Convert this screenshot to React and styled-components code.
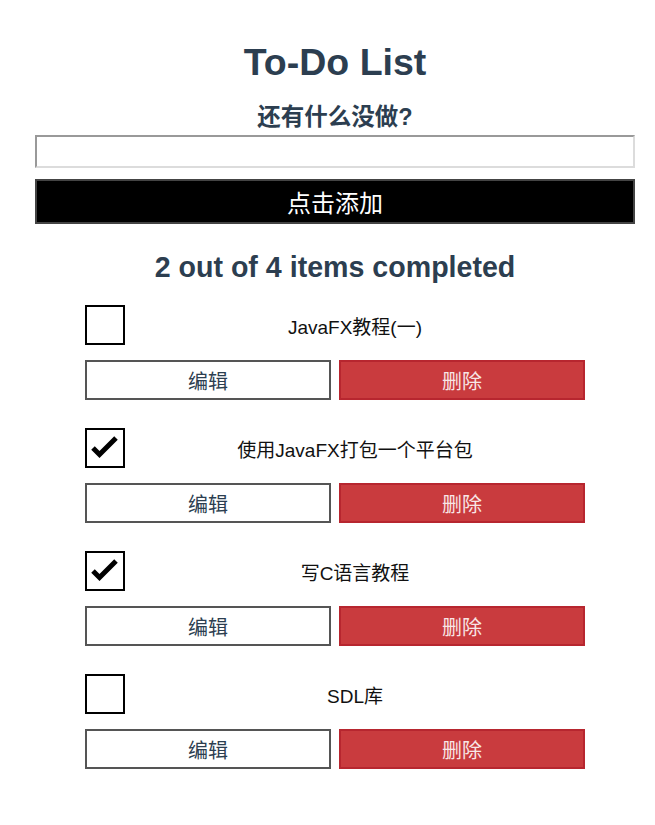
import React, { useState } from "react";
import styled, { createGlobalStyle } from "styled-components";

const Global = createGlobalStyle`
  html, body { margin: 0; padding: 0; background: #fff; }
  body { font-family: "Liberation Sans", "Noto Sans CJK SC", sans-serif; }
  * { box-sizing: border-box; }
`;

const Page = styled.div`
  width: 600px;
  margin-left: 35px;
  padding-top: 40px;
  display: flex;
  flex-direction: column;
  align-items: stretch;
  color: #2c3e50;
`;

const Title = styled.h1`
  margin: 0;
  font-size: 37.5px;
  line-height: 44px;
  font-weight: bold;
  text-align: center;
`;

const Subtitle = styled.h2`
  margin: 18px 0 0;
  font-size: 23.5px;
  line-height: 30px;
  font-weight: bold;
  text-align: center;
`;

const TextInput = styled.input`
  margin-top: 3px;
  height: 33px;
  width: 100%;
  border: 2px solid;
  border-color: #999 #dcdcdc #dcdcdc #999;
  font-size: 18px;
  padding: 0 6px;
  outline: none;
`;

const AddButton = styled.button`
  margin-top: 11px;
  height: 45px;
  width: 100%;
  background: #000;
  color: #fff;
  border: 2px solid #444;
  font-family: "Liberation Sans", "Noto Sans CJK SC", sans-serif;
  font-size: 24px;
  cursor: pointer;
`;

const Summary = styled.h2`
  margin: 26px 0 0;
  font-size: 28.6px;
  line-height: 34px;
  font-weight: bold;
  text-align: center;
`;

const List = styled.ul`
  list-style: none;
  margin: 21px 0 0 50px;
  padding: 0;
  width: 500px;
  display: flex;
  flex-direction: column;
  gap: 28px;
`;

const Item = styled.li`
  display: flex;
  flex-direction: column;
  gap: 15px;
`;

const Row = styled.div`
  display: flex;
  align-items: center;
`;

const Check = styled.button`
  width: 40px;
  height: 40px;
  flex: none;
  padding: 0;
  border: 2px solid #000;
  background: #fff;
  display: flex;
  align-items: center;
  justify-content: center;
  cursor: pointer;
`;

const Label = styled.span`
  flex: 1;
  text-align: center;
  font-size: 19px;
  color: #111;
`;

const Buttons = styled.div`
  display: grid;
  grid-template-columns: 1fr 1fr;
  gap: 8px;
`;

const ActionButton = styled.button`
  height: 40px;
  font-family: "Liberation Sans", "Noto Sans CJK SC", sans-serif;
  font-size: 20px;
  cursor: pointer;
  border: 2px solid ${(p) => (p.$danger ? "#b7262f" : "#555")};
  background: ${(p) => (p.$danger ? "#c93b3e" : "#fff")};
  color: ${(p) => (p.$danger ? "#f8e6e6" : "#2c3e50")};
`;

const CheckMark = () => (
  <svg width="30" height="30" viewBox="0 0 30 30">
    <path
      d="M3 15 L9.5 21.5 L26 5"
      fill="none"
      stroke="#000"
      strokeWidth="5"
      strokeLinecap="butt"
      strokeLinejoin="miter"
    />
  </svg>
);

const initial = [
  { id: 1, name: "JavaFX教程(一)", done: false },
  { id: 2, name: "使用JavaFX打包一个平台包", done: true },
  { id: 3, name: "写C语言教程", done: true },
  { id: 4, name: "SDL库", done: false },
];

export default function App() {
  const [todos, setTodos] = useState(initial);
  const doneCount = todos.filter((t) => t.done).length;
  const toggle = (id) =>
    setTodos((ts) => ts.map((t) => (t.id === id ? { ...t, done: !t.done } : t)));

  return (
    <>
      <Global />
      <Page>
        <Title>To-Do List</Title>
        <Subtitle>还有什么没做?</Subtitle>
        <TextInput type="text" />
        <AddButton>点击添加</AddButton>
        <Summary>
          {doneCount} out of {todos.length} items completed
        </Summary>
        <List>
          {todos.map((t) => (
            <Item key={t.id}>
              <Row>
                <Check role="checkbox" aria-checked={t.done} onClick={() => toggle(t.id)}>
                  {t.done && <CheckMark />}
                </Check>
                <Label>{t.name}</Label>
              </Row>
              <Buttons>
                <ActionButton>编辑</ActionButton>
                <ActionButton $danger>删除</ActionButton>
              </Buttons>
            </Item>
          ))}
        </List>
      </Page>
    </>
  );
}
